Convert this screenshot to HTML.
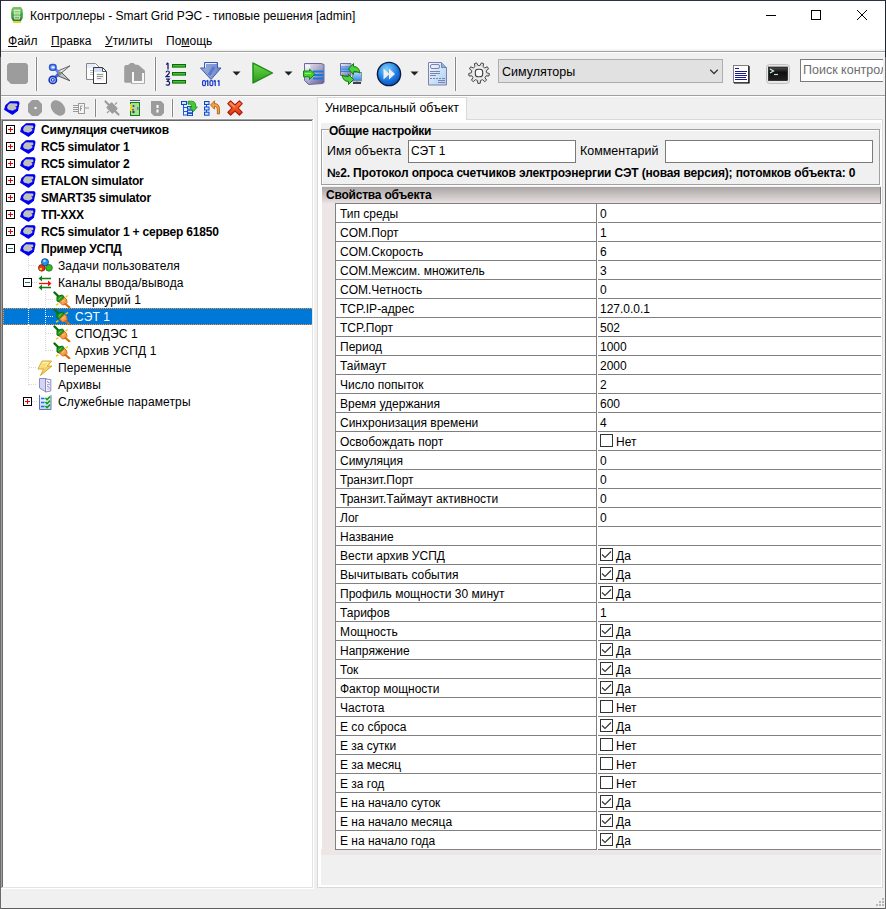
<!DOCTYPE html>
<html><head><meta charset="utf-8">
<style>
*{margin:0;padding:0;box-sizing:border-box}
html,body{width:886px;height:909px;overflow:hidden;background:#f0f0f0;font-family:"Liberation Sans",sans-serif;font-size:12px;color:#000}
.a{position:absolute;display:block}
.t{position:absolute;white-space:pre;line-height:14px}
.b{font-weight:bold}
.w{color:#fff}
</style></head><body>
<div class="a" style="left:0px;top:0px;width:886px;height:51px;background:#fff"></div><div class="a" style="left:0px;top:49px;width:886px;height:2px;background:#f4f4f4"></div><div class="a" style="left:0px;top:51px;width:886px;height:1px;background:#a0a0a0"></div><div class="a" style="left:0px;top:52px;width:886px;height:1px;background:#fff"></div><div class="t" style="left:30px;top:9px;">Контроллеры - Smart Grid РЭС - типовые решения [admin]</div><svg class="a" style="left:10px;top:6px" width="14" height="18" viewBox="0 0 14 18"><defs><linearGradient id="ga" x1="0" y1="0" x2="0" y2="1"><stop offset="0" stop-color="#7ac860"/><stop offset=".6" stop-color="#3aa83a"/><stop offset="1" stop-color="#18802a"/></linearGradient></defs>
<path d="M3 1h8l1.5 2.5L13 8l-.5 4.5L11 15H3l-1.5-2.5L1 8l.5-4.5z" fill="url(#ga)"/>
<path d="M3.5 3.5h7l-.5 6h-6z" fill="#d8e4da"/>
<path d="M3.5 10h7l-.8 3.5H4.3z" fill="#d0d4d0"/>
<rect x="4.5" y="5" width="5" height="1.4" fill="#8cd060"/><rect x="4.5" y="7.6" width="5" height="1.4" fill="#8cd060"/><rect x="5" y="11" width="4" height="1.4" fill="#6cc040"/>
<rect x="3" y="15" width="8" height="2" fill="#e8d430"/></svg><div class="a" style="left:766px;top:15px;width:10px;height:1px;background:#000"></div><div class="a" style="left:811px;top:10px;width:10px;height:10px;border:1px solid #000"></div><svg class="a" style="left:856px;top:9px" width="12" height="12" viewBox="0 0 12 12"><path d="M1 1L11 11M11 1L1 11" stroke="#000" stroke-width="1"/></svg><div class="t" style="left:8px;top:34px;"><u>Ф</u>айл</div><div class="t" style="left:51px;top:34px;"><u>П</u>равка</div><div class="t" style="left:105px;top:34px;"><u>У</u>тилиты</div><div class="t" style="left:166px;top:34px;">По<u>м</u>ощь</div><div class="a" style="left:1px;top:53px;width:884px;height:42px;background:#f0f0f0"></div><div class="a" style="left:1px;top:95px;width:884px;height:1px;background:#a0a0a0"></div><div class="a" style="left:1px;top:96px;width:884px;height:1px;background:#fff"></div><div class="a" style="left:35px;top:57px;width:3px;height:34px;background:#fafafa"></div><div class="a" style="left:36px;top:57px;width:1px;height:34px;background:#858585"></div><div class="a" style="left:154px;top:57px;width:3px;height:34px;background:#fafafa"></div><div class="a" style="left:155px;top:57px;width:1px;height:34px;background:#858585"></div><div class="a" style="left:454px;top:57px;width:3px;height:34px;background:#fafafa"></div><div class="a" style="left:455px;top:57px;width:1px;height:34px;background:#858585"></div><svg class="a" style="left:7px;top:63px" width="22" height="22" viewBox="0 0 22 22"><path d="M2 0h17l2 2v17l-2 2H4l-4-4V2z" fill="#9c9c9c"/></svg><svg class="a" style="left:46px;top:61px" width="28" height="26" viewBox="0 0 28 26"><path d="M10.5 10.5L24 4.8L13 14z" fill="#e0e0e0" stroke="#5a5a5a" stroke-width=".9" stroke-linejoin="round"/>
<path d="M11 14.5L24 19.8L15 11z" fill="#c4c4c4" stroke="#4a4a4a" stroke-width=".9" stroke-linejoin="round"/>
<circle cx="13.5" cy="12.5" r="2" fill="#8a8a8a"/>
<path d="M8.5 7.5l4 3.5" stroke="#5a88e8" stroke-width="2.6"/>
<rect x="3.6" y="3.6" width="6.4" height="5.6" rx="2.4" fill="#88a8f0" stroke="#2a58d0" stroke-width="1.5"/>
<rect x="5.8" y="5.6" width="2.6" height="1.4" fill="#fff"/>
<path d="M9.5 16l3-3" stroke="#3a68d8" stroke-width="2.8"/>
<ellipse cx="6.8" cy="18.9" rx="3.7" ry="3.6" fill="#a0b8f4" stroke="#1030b8" stroke-width="1.5"/>
<circle cx="6.8" cy="18.9" r="1.4" fill="#fff" stroke="#1030b8" stroke-width="1"/></svg><svg class="a" style="left:84px;top:61px" width="26" height="26" viewBox="0 0 26 26"><path d="M2.5 2.5H11.5L15.5 6.5V18.5H2.5Z" fill="#fff" stroke="#888" stroke-width="1"/>
<rect x="3" y="3" width="8.5" height="4" fill="#e6ecfc"/>
<path d="M6 9.5h3M6 11.5h3M6 13.5h3" stroke="#c0c0c0"/>
<path d="M9.5 6.5H18.5L22.5 10.5V22.5H9.5Z" fill="#fff" stroke="#383838" stroke-width="1"/>
<path d="M18.5 6.5V10.5H22.5" fill="none" stroke="#555" stroke-width="1"/>
<rect x="10" y="7" width="8" height="4" fill="#d2ddf8"/>
<rect x="12" y="12" width="8" height="7.5" fill="#f0f0f0"/>
<path d="M13 13.5h6M13 15.5h6M13 17.5h4" stroke="#9a9a9a"/></svg><svg class="a" style="left:122px;top:61px" width="24" height="24" viewBox="0 0 24 24"><path d="M2.2 5.5L3.5 4L6 4L8.5 2L11.5 2L13 3.5L16.5 4L22.9 9.5V22.8H9V21.7H3L2.2 20.8Z" fill="#9e9e9e"/>
<path d="M11 11V21H21V12" stroke="#f8f8f8" stroke-width="2" fill="none"/></svg><svg class="a" style="left:165px;top:62px" width="22" height="24" viewBox="0 0 22 24"><path d="M3 1v6.5M1.2 2.6L3 .8" stroke="#141e70" stroke-width="1.3" fill="none"/>
<path d="M1 10.3Q1.3 9 2.7 9Q4.4 9 4.3 10.6Q4.2 11.8 1 14.6H4.8" stroke="#141e70" stroke-width="1.2" fill="none"/>
<path d="M1 17.2H4.3L2.4 19.4Q4.6 19.3 4.6 21.2Q4.5 23.2 2.5 23.2Q1.3 23.2 .8 22.5" stroke="#141e70" stroke-width="1.2" fill="none"/>
<rect x="7.5" y="2.5" width="13" height="2.6" fill="#44c030" stroke="#0a6a0a"/>
<rect x="7.5" y="10.5" width="13" height="2.6" fill="#44c030" stroke="#0a6a0a"/>
<rect x="7.5" y="18.5" width="13" height="2.6" fill="#44c030" stroke="#0a6a0a"/></svg><svg class="a" style="left:199px;top:61px" width="24" height="26" viewBox="0 0 24 26"><defs><linearGradient id="gd" x1="0" x2="1"><stop offset="0" stop-color="#9ab0d8"/><stop offset="1" stop-color="#7088c8"/></linearGradient></defs>
<path d="M5.5 1.5h13v5.5h3.5l-10 11.5-10.5-11.5h4z" fill="url(#gd)" stroke="#3a5ab8" stroke-linejoin="round"/>
<path d="M6.5 6.5V2.5h11" stroke="#e8f0ff" fill="none"/>
<path d="M10 14l5-8" stroke="#5a78d0" stroke-width="3"/>
<rect x="3.6" y="19.6" width="2.8" height="5" rx="1" fill="none" stroke="#1a3cc8" stroke-width="1.2"/><rect x="11" y="19.6" width="2.8" height="5" rx="1" fill="none" stroke="#1a3cc8" stroke-width="1.2"/>
<path d="M8.8 19.2v5.8M16.2 19.2v5.8M20 19.2v5.8M7.4 20.4l1.4-1.2M14.8 20.4l1.4-1.2M18.6 20.4l1.4-1.2" stroke="#1a3cc8" stroke-width="1.3"/></svg><svg class="a" style="left:232px;top:71px" width="9" height="5" viewBox="0 0 9 5"><path d="M0.5 .5h8l-4 4z" fill="#202020"/></svg><svg class="a" style="left:252px;top:62px" width="22" height="22" viewBox="0 0 22 22"><defs><linearGradient id="gp" x1="0" y1="0" x2="0" y2="1"><stop offset="0" stop-color="#70d850"/><stop offset="1" stop-color="#2a9a18"/></linearGradient></defs>
<path d="M1 1l19.5 10L1 21z" fill="url(#gp)" stroke="#1c8a10" stroke-width="1.4" stroke-linejoin="round"/></svg><svg class="a" style="left:284px;top:71px" width="9" height="5" viewBox="0 0 9 5"><path d="M0.5 .5h8l-4 4z" fill="#202020"/></svg><svg class="a" style="left:301px;top:60px" width="26" height="27" viewBox="0 0 26 27"><defs><linearGradient id="gs" x1="0" y1="0" x2="1" y2="1"><stop offset="0" stop-color="#f0f0ff"/><stop offset=".45" stop-color="#b4b0c8"/><stop offset="1" stop-color="#5a5a98"/></linearGradient>
<linearGradient id="gs2" x1="0" y1="0" x2="0" y2="1"><stop offset="0" stop-color="#f8f8ff"/><stop offset="1" stop-color="#9a9ad0"/></linearGradient></defs>
<path d="M3.5 3.5H20L23 4.5V22.5L21.5 23.5L7.5 24.5L3.5 20.5Z" fill="url(#gs)" stroke="#6a6a9a" stroke-width="1" stroke-linejoin="round"/>
<path d="M4 5H9V24L4 20Z" fill="url(#gs2)"/>
<path d="M12 11.5h10.5M12 15h10.5M12 18.5h10.5" stroke="#1878e0" stroke-width="1.8"/>
<path d="M2.5 11H8.5V9.2L13.8 14L8.5 19.5V16.8H2.5Z" fill="#48d030" stroke="#0a8a0a" stroke-width="1" stroke-linejoin="round"/>
<path d="M4 13.5h6" stroke="#90f070" stroke-width="1"/></svg><svg class="a" style="left:336px;top:60px" width="28" height="27" viewBox="0 0 28 27"><defs><linearGradient id="gsy" x1="0" y1="0" x2="1" y2="1"><stop offset="0" stop-color="#f0f0ff"/><stop offset="1" stop-color="#7070a8"/></linearGradient>
<linearGradient id="gmo" x1="0" y1="0" x2="0" y2="1"><stop offset="0" stop-color="#a8d8ff"/><stop offset="1" stop-color="#2a88e8"/></linearGradient></defs>
<path d="M4.5 3.5H15V15.5H4.5Z" fill="url(#gsy)" stroke="#7070a0" stroke-width="1"/>
<path d="M5 7h9M5 9.2h9M5 11.4h9" stroke="#2080e0" stroke-width="1.2"/>
<rect x="16.5" y="12.5" width="9" height="8.5" fill="url(#gmo)" stroke="#909090"/>
<path d="M17 23h8" stroke="#404040" stroke-width="2"/><path d="M21 21v1" stroke="#808080"/>
<path d="M12.5 9L17.5 3.5V6.5Q23 6.5 24 13Q21.5 11 17.5 11.5V14.5Z" fill="#50d040" stroke="#0a800a" stroke-width="1" stroke-linejoin="round"/>
<path d="M17.5 19.5L12.5 24.5V21.5Q7 21.5 6 15Q8.5 17 12.5 16.5V14.5Z" fill="#50d040" stroke="#0a800a" stroke-width="1" stroke-linejoin="round"/></svg><svg class="a" style="left:376px;top:61px" width="26" height="26" viewBox="0 0 26 26"><defs><radialGradient id="gb" cx=".4" cy=".3" r=".8"><stop offset="0" stop-color="#80d0ff"/><stop offset=".6" stop-color="#1878e0"/><stop offset="1" stop-color="#0840b0"/></radialGradient></defs>
<circle cx="13" cy="13" r="11.6" fill="url(#gb)" stroke="#0a1a40" stroke-width="1.4"/>
<path d="M7.5 7.5l6 5.5-6 5.5zM13 7.5l6 5.5-6 5.5z" fill="#f0f0f0"/></svg><svg class="a" style="left:410px;top:71px" width="9" height="5" viewBox="0 0 9 5"><path d="M0.5 .5h8l-4 4z" fill="#202020"/></svg><svg class="a" style="left:428px;top:62px" width="20" height="24" viewBox="0 0 20 24"><defs><linearGradient id="gdc" x1="0" y1="0" x2="1" y2="1"><stop offset="0" stop-color="#f4f8ff"/><stop offset="1" stop-color="#a8d0f0"/></linearGradient></defs>
<path d="M.5 .5h13l5 5v17.5H.5z" fill="url(#gdc)" stroke="#8080b0"/>
<path d="M13.5 .5v5h5" fill="#7ab8e8" stroke="#8080b0"/>
<rect x="2.5" y="2.5" width="9" height="4" rx="1.5" fill="none" stroke="#8080b0"/>
<path d="M2 9.5h10M2 11.5h10M2 13.5h6M2 16.5h2M5 16.5h2M8 16.5h2M11 16.5h2M14 16.5h3M10 18.5h7M10 20.5h7" stroke="#8080b0" stroke-width="1"/></svg><svg class="a" style="left:468px;top:62px" width="22" height="22" viewBox="0 0 22 22"><defs><radialGradient id="gg" cx=".5" cy=".5" r=".5"><stop offset=".3" stop-color="#f8f8f8"/><stop offset="1" stop-color="#d8d8d8"/></radialGradient></defs>
<polygon points="12.06,3.47 13.37,0.87 15.69,1.72 15.03,4.55 16.65,5.91 19.33,4.77 20.56,6.90 18.23,8.65 18.60,10.73 21.38,11.58 20.96,14.01 18.05,13.85 16.99,15.68 18.58,18.12 16.69,19.70 14.57,17.71 12.58,18.43 12.23,21.33 9.77,21.33 9.42,18.43 7.43,17.71 5.31,19.70 3.42,18.12 5.01,15.68 3.95,13.85 1.04,14.01 0.62,11.58 3.40,10.73 3.77,8.65 1.44,6.90 2.67,4.77 5.35,5.91 6.97,4.55 6.31,1.72 8.63,0.87 9.94,3.47" fill="url(#gg)" stroke="#4a4a4a" stroke-width="1" stroke-linejoin="round"/>
<rect x="7.3" y="7.3" width="7.4" height="7.4" rx="2.8" fill="#fafafa" stroke="#3a3a3a" stroke-width="1.1"/></svg><div class="a" style="left:498px;top:59px;width:225px;height:24px;background:#e1e1e1;border:1px solid #adadad"></div><div class="t" style="left:502px;top:65px;font-size:12.5px">Симуляторы</div><svg class="a" style="left:709px;top:68px" width="10" height="7" viewBox="0 0 10 7"><path d="M1.2 1.8L5 5.5L8.8 1.8" fill="none" stroke="#3a3a3a" stroke-width="1.3"/></svg><svg class="a" style="left:733px;top:65px" width="17" height="19" viewBox="0 0 17 19"><rect x=".5" y=".5" width="15" height="17" fill="#fff" stroke="#808080"/>
<path d="M16 1v17H1" stroke="#000" stroke-width="1.2" fill="none"/>
<path d="M2 3.5h4M2 6.5h12M2 8.5h11M2 10.5h12M2 12.5h11M2 14.5h12" stroke="#1a1a90" stroke-width="1.1"/></svg><svg class="a" style="left:766px;top:64px" width="24" height="20" viewBox="0 0 24 20"><rect x=".5" y=".5" width="23" height="19" rx="3" fill="#e8e8e8" stroke="#c0c0c0"/>
<defs><linearGradient id="gt" x1="0" y1="0" x2="0" y2="1"><stop offset="0" stop-color="#505050"/><stop offset=".4" stop-color="#101010"/><stop offset="1" stop-color="#202020"/></linearGradient></defs>
<rect x="2.5" y="3" width="19" height="13.5" fill="url(#gt)" stroke="#000" stroke-width=".6"/>
<path d="M4 5l3.5 2L4 9" stroke="#d0f0f0" stroke-width="1.2" fill="none"/><path d="M8 10.5h4" stroke="#b0e0e0" stroke-width="1.2"/></svg><div class="a" style="left:800px;top:59px;width:83px;height:23px;background:#fff;border:1px solid #7a7a7a;border-right:none;overflow:hidden"><div class="t" style="left:2px;top:3px;color:#6d6d6d;font-size:12.5px">Поиск контроллера</div></div><div class="a" style="left:94px;top:99px;width:3px;height:18px;background:#fafafa"></div><div class="a" style="left:95px;top:99px;width:1px;height:18px;background:#858585"></div><div class="a" style="left:171px;top:99px;width:3px;height:18px;background:#fafafa"></div><div class="a" style="left:172px;top:99px;width:1px;height:18px;background:#858585"></div><svg class="a" style="left:4px;top:100px" width="16" height="16" viewBox="0 0 16 16"><path d="M6.4 1.8L14 1.8Q15 2.2 14.8 3.5L13.3 10.6L8.4 14.2L0.8 9.5L2 5.5z" fill="#0000f0" stroke="#0000f0" stroke-width="1.3" stroke-linejoin="round"/>
<path d="M6 3.2L12.8 3.6Q13.8 4.6 13.2 6L11.2 6.6L12.6 7.8L12 9L8.5 10.8L4 9.5L3 7.5Q3.5 4.5 6 3.2z" fill="#c0c0bc"/></svg><svg class="a" style="left:28px;top:100px" width="15" height="16" viewBox="0 0 15 16"><path d="M4 0h6l4 4v8l-4 4H4l-4-4V4z" fill="#9c9c9c"/><rect x="6.5" y="7" width="2" height="2" fill="#fff"/></svg><svg class="a" style="left:50px;top:100px" width="16" height="16" viewBox="0 0 16 16"><ellipse cx="8" cy="8" rx="6.2" ry="8.6" transform="rotate(-40 8 8)" fill="#9c9c9c"/></svg><svg class="a" style="left:73px;top:103px" width="16" height="11" viewBox="0 0 16 11"><rect x="5.5" y=".5" width="6" height="10" fill="#f4f4f4" stroke="#9a9a9a"/>
<path d="M0 2.5h5M0 4.5h5M0 6.5h5M0 8.5h5M12 5h4" stroke="#9a9a9a"/><path d="M7.5 3v5M7.5 3h2M7.5 5.5h1.5" stroke="#9a9a9a"/></svg><svg class="a" style="left:104px;top:100px" width="16" height="16" viewBox="0 0 16 16"><path d="M1.5 1.5l13 13" stroke="#9c9c9c" stroke-width="2.2" stroke-linecap="round"/>
<path d="M8 8" stroke="#9c9c9c"/><path d="M3.5 7.5L7.5 3.5L12.5 8.5L8.5 12.5z" fill="#9c9c9c" stroke="#9c9c9c" stroke-width="2.2" stroke-linejoin="round"/>
<path d="M11 4.5l2-2M3 13l2-2" stroke="#9c9c9c" stroke-width="1.2"/></svg><svg class="a" style="left:129px;top:100px" width="12" height="16" viewBox="0 0 12 16"><rect x="1" y="0" width="10" height="1" fill="#506080"/>
<rect x="1.5" y="2.5" width="9" height="13" fill="#a8e090" stroke="#108010"/>
<rect x="1" y="4" width="1.5" height="7" fill="#f0e000"/>
<circle cx="4.5" cy="6" r="1" fill="#2040a0"/><circle cx="4.5" cy="12" r="1.2" fill="#2040a0"/><rect x="3" y="9" width="2" height="1.5" fill="#e04020"/><rect x="8" y="7" width="1.5" height="3" fill="#6080e0"/></svg><svg class="a" style="left:151px;top:101px" width="14" height="15" viewBox="0 0 14 15"><path d="M0 0h10l3 3v9l-3 3H3l-3-3z" fill="#9c9c9c"/><rect x="5.5" y="4" width="2" height="3" fill="#fff"/><rect x="5.5" y="8.5" width="2" height="3" fill="#fff"/></svg><svg class="a" style="left:181px;top:100px" width="17" height="16" viewBox="0 0 17 16"><path d="M2.5 5v10.5M2.5 7.5h4M2.5 11.5h4M2.5 15h4" stroke="#1060e0"/>
<rect x=".5" y="1.5" width="5" height="3" fill="#d0e4ff" stroke="#0a48c8"/>
<rect x="6.5" y="6.5" width="5" height="2.6" fill="#d0e4ff" stroke="#0a48c8"/><rect x="6.5" y="10.2" width="5" height="2.6" fill="#d0e4ff" stroke="#0a48c8"/><rect x="6.5" y="13.4" width="5" height="2.2" fill="#d0e4ff" stroke="#0a48c8"/>
<path d="M7 1.2h3.5c3 0 4.2 1.8 4.2 4.5v1.3h1.6L12.5 11.5 8.7 7h1.8V6c0-1.2-.7-1.8-2-1.8H7z" fill="#48c838" stroke="#108a10" stroke-width=".8"/></svg><svg class="a" style="left:203px;top:100px" width="18" height="16" viewBox="0 0 18 16"><path d="M3.5 4.5v9" stroke="#1060e0"/>
<rect x="1.5" y="1.5" width="4.5" height="3" fill="#d0e4ff" stroke="#0a48c8"/><rect x="1.5" y="7" width="4.5" height="3" fill="#d0e4ff" stroke="#0a48c8"/><rect x="1.5" y="12.2" width="4.5" height="3" fill="#d0e4ff" stroke="#0a48c8"/>
<path d="M7.5 5l4-4.2v2.7c3 0 5 2 5 5.2v5.2h-2.2V9c0-1.6-1.2-2.6-2.8-2.6v2.8z" fill="#f4a040" stroke="#a85810" stroke-width=".8"/></svg><svg class="a" style="left:227px;top:100px" width="17" height="16" viewBox="0 0 17 16"><defs><linearGradient id="gx" x1="0" y1="0" x2="0" y2="1"><stop offset="0" stop-color="#ff8040"/><stop offset="1" stop-color="#e03000"/></linearGradient></defs>
<path d="M.8 3.6L3.6 .8L8 4.8L12.4 .8L15.2 3.6L11.2 8L15.2 12.4L12.4 15.2L8 11.2L3.6 15.2L.8 12.4L4.8 8Z" fill="url(#gx)" stroke="#a01818" stroke-width="1.1" stroke-linejoin="round"/>
<path d="M3.5 3.3L8 7.3" stroke="#ffb080" stroke-width="1"/></svg><div class="a" style="left:0px;top:118px;width:313px;height:1px;background:#f8f8f8"></div><div class="a" style="left:3px;top:121px;width:309px;height:766px;background:#fff"></div><div class="a" style="left:1px;top:119px;width:312px;height:1px;background:#a0a0a0"></div><div class="a" style="left:2px;top:120px;width:310px;height:1px;background:#696969"></div><div class="a" style="left:2px;top:120px;width:1px;height:767px;background:#696969"></div><div class="a" style="left:312px;top:120px;width:1px;height:768px;background:#e3e3e3"></div><div class="a" style="left:2px;top:887px;width:311px;height:1px;background:#e3e3e3"></div><div class="a" style="left:3px;top:308px;width:309px;height:17px;background:#0078d7"></div><div class="a" style="left:3px;top:308px;width:309px;height:1px;background:repeating-linear-gradient(to right,#ff9030 0 1px,transparent 1px 2px)"></div><div class="a" style="left:3px;top:324px;width:309px;height:1px;background:repeating-linear-gradient(to right,#ff9030 0 1px,transparent 1px 2px)"></div><div class="a" style="left:3px;top:308px;width:1px;height:17px;background:repeating-linear-gradient(to bottom,#ff9030 0 1px,transparent 1px 2px)"></div><div class="a" style="left:28px;top:256px;width:1px;height:129px;background:repeating-linear-gradient(to bottom,#d8d8d8 0 1px,transparent 1px 2px)"></div><div class="a" style="left:29px;top:265px;width:8px;height:1px;background:repeating-linear-gradient(to right,#d8d8d8 0 1px,transparent 1px 2px)"></div><div class="a" style="left:29px;top:367px;width:8px;height:1px;background:repeating-linear-gradient(to right,#d8d8d8 0 1px,transparent 1px 2px)"></div><div class="a" style="left:29px;top:384px;width:8px;height:1px;background:repeating-linear-gradient(to right,#d8d8d8 0 1px,transparent 1px 2px)"></div><div class="a" style="left:32px;top:282px;width:5px;height:1px;background:repeating-linear-gradient(to right,#d8d8d8 0 1px,transparent 1px 2px)"></div><div class="a" style="left:32px;top:401px;width:5px;height:1px;background:repeating-linear-gradient(to right,#d8d8d8 0 1px,transparent 1px 2px)"></div><div class="a" style="left:45px;top:290px;width:1px;height:61px;background:repeating-linear-gradient(to bottom,#d8d8d8 0 1px,transparent 1px 2px)"></div><div class="a" style="left:46px;top:299px;width:8px;height:1px;background:repeating-linear-gradient(to right,#d8d8d8 0 1px,transparent 1px 2px)"></div><div class="a" style="left:46px;top:333px;width:8px;height:1px;background:repeating-linear-gradient(to right,#d8d8d8 0 1px,transparent 1px 2px)"></div><div class="a" style="left:46px;top:350px;width:8px;height:1px;background:repeating-linear-gradient(to right,#d8d8d8 0 1px,transparent 1px 2px)"></div><div class="a" style="left:28px;top:308px;width:1px;height:17px;background:repeating-linear-gradient(to bottom,#fff 0 1px,transparent 1px 2px)"></div><div class="a" style="left:45px;top:308px;width:1px;height:17px;background:repeating-linear-gradient(to bottom,#fff 0 1px,transparent 1px 2px)"></div><div class="a" style="left:46px;top:316px;width:8px;height:1px;background:repeating-linear-gradient(to right,#fff 0 1px,transparent 1px 2px)"></div><svg class="a" style="left:6px;top:125px" width="9" height="9" viewBox="0 0 9 9"><rect x=".5" y=".5" width="8" height="8" fill="#fff" stroke="#000"/><path d="M2 4.5h5" stroke="#e00000"/><path d="M4.5 2v5" stroke="#e00000"/></svg><svg class="a" style="left:20px;top:122px" width="16" height="16" viewBox="0 0 16 16"><path d="M6.4 1.8L14 1.8Q15 2.2 14.8 3.5L13.3 10.6L8.4 14.2L0.8 9.5L2 5.5z" fill="#0000f0" stroke="#0000f0" stroke-width="1.3" stroke-linejoin="round"/>
<path d="M6 3.2L12.8 3.6Q13.8 4.6 13.2 6L11.2 6.6L12.6 7.8L12 9L8.5 10.8L4 9.5L3 7.5Q3.5 4.5 6 3.2z" fill="#c0c0bc"/></svg><div class="t" style="left:41px;top:123px;font-weight:bold;letter-spacing:-0.2px">Симуляция счетчиков</div><svg class="a" style="left:6px;top:142px" width="9" height="9" viewBox="0 0 9 9"><rect x=".5" y=".5" width="8" height="8" fill="#fff" stroke="#000"/><path d="M2 4.5h5" stroke="#e00000"/><path d="M4.5 2v5" stroke="#e00000"/></svg><svg class="a" style="left:20px;top:139px" width="16" height="16" viewBox="0 0 16 16"><path d="M6.4 1.8L14 1.8Q15 2.2 14.8 3.5L13.3 10.6L8.4 14.2L0.8 9.5L2 5.5z" fill="#0000f0" stroke="#0000f0" stroke-width="1.3" stroke-linejoin="round"/>
<path d="M6 3.2L12.8 3.6Q13.8 4.6 13.2 6L11.2 6.6L12.6 7.8L12 9L8.5 10.8L4 9.5L3 7.5Q3.5 4.5 6 3.2z" fill="#c0c0bc"/></svg><div class="t" style="left:41px;top:140px;font-weight:bold;letter-spacing:-0.2px">RC5 simulator 1</div><svg class="a" style="left:6px;top:159px" width="9" height="9" viewBox="0 0 9 9"><rect x=".5" y=".5" width="8" height="8" fill="#fff" stroke="#000"/><path d="M2 4.5h5" stroke="#e00000"/><path d="M4.5 2v5" stroke="#e00000"/></svg><svg class="a" style="left:20px;top:156px" width="16" height="16" viewBox="0 0 16 16"><path d="M6.4 1.8L14 1.8Q15 2.2 14.8 3.5L13.3 10.6L8.4 14.2L0.8 9.5L2 5.5z" fill="#0000f0" stroke="#0000f0" stroke-width="1.3" stroke-linejoin="round"/>
<path d="M6 3.2L12.8 3.6Q13.8 4.6 13.2 6L11.2 6.6L12.6 7.8L12 9L8.5 10.8L4 9.5L3 7.5Q3.5 4.5 6 3.2z" fill="#c0c0bc"/></svg><div class="t" style="left:41px;top:157px;font-weight:bold;letter-spacing:-0.2px">RC5 simulator 2</div><svg class="a" style="left:6px;top:176px" width="9" height="9" viewBox="0 0 9 9"><rect x=".5" y=".5" width="8" height="8" fill="#fff" stroke="#000"/><path d="M2 4.5h5" stroke="#e00000"/><path d="M4.5 2v5" stroke="#e00000"/></svg><svg class="a" style="left:20px;top:173px" width="16" height="16" viewBox="0 0 16 16"><path d="M6.4 1.8L14 1.8Q15 2.2 14.8 3.5L13.3 10.6L8.4 14.2L0.8 9.5L2 5.5z" fill="#0000f0" stroke="#0000f0" stroke-width="1.3" stroke-linejoin="round"/>
<path d="M6 3.2L12.8 3.6Q13.8 4.6 13.2 6L11.2 6.6L12.6 7.8L12 9L8.5 10.8L4 9.5L3 7.5Q3.5 4.5 6 3.2z" fill="#c0c0bc"/></svg><div class="t" style="left:41px;top:174px;font-weight:bold;letter-spacing:-0.2px">ETALON simulator</div><svg class="a" style="left:6px;top:193px" width="9" height="9" viewBox="0 0 9 9"><rect x=".5" y=".5" width="8" height="8" fill="#fff" stroke="#000"/><path d="M2 4.5h5" stroke="#e00000"/><path d="M4.5 2v5" stroke="#e00000"/></svg><svg class="a" style="left:20px;top:190px" width="16" height="16" viewBox="0 0 16 16"><path d="M6.4 1.8L14 1.8Q15 2.2 14.8 3.5L13.3 10.6L8.4 14.2L0.8 9.5L2 5.5z" fill="#0000f0" stroke="#0000f0" stroke-width="1.3" stroke-linejoin="round"/>
<path d="M6 3.2L12.8 3.6Q13.8 4.6 13.2 6L11.2 6.6L12.6 7.8L12 9L8.5 10.8L4 9.5L3 7.5Q3.5 4.5 6 3.2z" fill="#c0c0bc"/></svg><div class="t" style="left:41px;top:191px;font-weight:bold;letter-spacing:-0.2px">SMART35 simulator</div><svg class="a" style="left:6px;top:210px" width="9" height="9" viewBox="0 0 9 9"><rect x=".5" y=".5" width="8" height="8" fill="#fff" stroke="#000"/><path d="M2 4.5h5" stroke="#e00000"/><path d="M4.5 2v5" stroke="#e00000"/></svg><svg class="a" style="left:20px;top:207px" width="16" height="16" viewBox="0 0 16 16"><path d="M6.4 1.8L14 1.8Q15 2.2 14.8 3.5L13.3 10.6L8.4 14.2L0.8 9.5L2 5.5z" fill="#0000f0" stroke="#0000f0" stroke-width="1.3" stroke-linejoin="round"/>
<path d="M6 3.2L12.8 3.6Q13.8 4.6 13.2 6L11.2 6.6L12.6 7.8L12 9L8.5 10.8L4 9.5L3 7.5Q3.5 4.5 6 3.2z" fill="#c0c0bc"/></svg><div class="t" style="left:41px;top:208px;font-weight:bold;letter-spacing:-0.2px">ТП-ХХХ</div><svg class="a" style="left:6px;top:227px" width="9" height="9" viewBox="0 0 9 9"><rect x=".5" y=".5" width="8" height="8" fill="#fff" stroke="#000"/><path d="M2 4.5h5" stroke="#e00000"/><path d="M4.5 2v5" stroke="#e00000"/></svg><svg class="a" style="left:20px;top:224px" width="16" height="16" viewBox="0 0 16 16"><path d="M6.4 1.8L14 1.8Q15 2.2 14.8 3.5L13.3 10.6L8.4 14.2L0.8 9.5L2 5.5z" fill="#0000f0" stroke="#0000f0" stroke-width="1.3" stroke-linejoin="round"/>
<path d="M6 3.2L12.8 3.6Q13.8 4.6 13.2 6L11.2 6.6L12.6 7.8L12 9L8.5 10.8L4 9.5L3 7.5Q3.5 4.5 6 3.2z" fill="#c0c0bc"/></svg><div class="t" style="left:41px;top:225px;font-weight:bold;letter-spacing:-0.2px">RC5 simulator 1 + сервер 61850</div><svg class="a" style="left:6px;top:244px" width="9" height="9" viewBox="0 0 9 9"><rect x=".5" y=".5" width="8" height="8" fill="#fff" stroke="#000"/><path d="M2 4.5h5" stroke="#008080"/></svg><svg class="a" style="left:20px;top:241px" width="16" height="16" viewBox="0 0 16 16"><path d="M6.4 1.8L14 1.8Q15 2.2 14.8 3.5L13.3 10.6L8.4 14.2L0.8 9.5L2 5.5z" fill="#0000f0" stroke="#0000f0" stroke-width="1.3" stroke-linejoin="round"/>
<path d="M6 3.2L12.8 3.6Q13.8 4.6 13.2 6L11.2 6.6L12.6 7.8L12 9L8.5 10.8L4 9.5L3 7.5Q3.5 4.5 6 3.2z" fill="#c0c0bc"/></svg><div class="t" style="left:41px;top:242px;font-weight:bold;letter-spacing:-0.2px">Пример УСПД</div><svg class="a" style="left:38px;top:258px" width="15" height="15" viewBox="0 0 15 15"><circle cx="3.8" cy="9.8" r="3.4" fill="#f03010" stroke="#401010" stroke-width=".6"/>
<circle cx="11" cy="9.8" r="3.4" fill="#30c020" stroke="#104010" stroke-width=".6"/>
<circle cx="7" cy="4.2" r="3.6" fill="#2090f0" stroke="#102050" stroke-width=".6"/>
<circle cx="2.8" cy="11" r="1.3" fill="#f8d020"/><circle cx="6.5" cy="3" r="1.3" fill="#a0e8ff"/></svg><div class="t" style="left:58px;top:259px;letter-spacing:0.12px">Задачи пользователя</div><svg class="a" style="left:23px;top:278px" width="9" height="9" viewBox="0 0 9 9"><rect x=".5" y=".5" width="8" height="8" fill="#fff" stroke="#000"/><path d="M2 4.5h5" stroke="#008080"/></svg><svg class="a" style="left:38px;top:275px" width="14" height="16" viewBox="0 0 14 16"><path d="M2 3.5h11M2 12.5h11" stroke="#108010" stroke-width="1.3"/><path d="M0.5 3.5l3.5-3v6zM0.5 12.5l3.5-3v6z" fill="#108010"/>
<path d="M1 8.5h10" stroke="#f01010" stroke-width="1.3"/><path d="M13.5 8.5l-3.5-3v6z" fill="#f01010"/></svg><div class="t" style="left:58px;top:276px;letter-spacing:0.12px">Каналы ввода/вывода</div><svg class="a" style="left:53px;top:290px" width="18" height="18" viewBox="0 0 18 18"><path d="M1.5 2.5l3.5 3.5" stroke="#0a700a" stroke-width="2.4" stroke-linecap="round"/>
<path d="M4 6.5L9.5 5L11.5 7.5L6.5 12L4 11z" fill="#1e9a1e" stroke="#0a6a0a" stroke-width="1" stroke-linejoin="round"/>
<path d="M5.5 9.5L8.5 7" stroke="#70d850" stroke-width="1"/>
<path d="M11.5 7.5L13.5 9.5L14 12.5L12 14.5L9.5 15L6.5 12z" fill="#f4a050" stroke="#d86a10" stroke-width="1" stroke-linejoin="round"/>
<path d="M9 11.5l2.5-1.5" stroke="#ffd090" stroke-width="1"/>
<path d="M12.5 14l3.8 3.3" stroke="#d86a10" stroke-width="2.2" stroke-linecap="round"/>
<path d="M12.5 7.2l2.5-1.7M3 15.2l2.5-1.5" stroke="#f0d000" stroke-width="1.4"/></svg><div class="t" style="left:75px;top:293px;letter-spacing:0.12px">Меркурий 1</div><svg class="a" style="left:53px;top:307px" width="18" height="18" viewBox="0 0 18 18"><path d="M1.5 2.5l3.5 3.5" stroke="#0a700a" stroke-width="2.4" stroke-linecap="round"/>
<path d="M4 6.5L9.5 5L11.5 7.5L6.5 12L4 11z" fill="#1e9a1e" stroke="#0a6a0a" stroke-width="1" stroke-linejoin="round"/>
<path d="M5.5 9.5L8.5 7" stroke="#70d850" stroke-width="1"/>
<path d="M11.5 7.5L13.5 9.5L14 12.5L12 14.5L9.5 15L6.5 12z" fill="#f4a050" stroke="#d86a10" stroke-width="1" stroke-linejoin="round"/>
<path d="M9 11.5l2.5-1.5" stroke="#ffd090" stroke-width="1"/>
<path d="M12.5 14l3.8 3.3" stroke="#d86a10" stroke-width="2.2" stroke-linecap="round"/>
<path d="M12.5 7.2l2.5-1.7M3 15.2l2.5-1.5" stroke="#f0d000" stroke-width="1.4"/></svg><div class="t" style="left:75px;top:310px;color:#fff;letter-spacing:0.12px">СЭТ 1</div><svg class="a" style="left:53px;top:324px" width="18" height="18" viewBox="0 0 18 18"><path d="M1.5 2.5l3.5 3.5" stroke="#0a700a" stroke-width="2.4" stroke-linecap="round"/>
<path d="M4 6.5L9.5 5L11.5 7.5L6.5 12L4 11z" fill="#1e9a1e" stroke="#0a6a0a" stroke-width="1" stroke-linejoin="round"/>
<path d="M5.5 9.5L8.5 7" stroke="#70d850" stroke-width="1"/>
<path d="M11.5 7.5L13.5 9.5L14 12.5L12 14.5L9.5 15L6.5 12z" fill="#f4a050" stroke="#d86a10" stroke-width="1" stroke-linejoin="round"/>
<path d="M9 11.5l2.5-1.5" stroke="#ffd090" stroke-width="1"/>
<path d="M12.5 14l3.8 3.3" stroke="#d86a10" stroke-width="2.2" stroke-linecap="round"/>
<path d="M12.5 7.2l2.5-1.7M3 15.2l2.5-1.5" stroke="#f0d000" stroke-width="1.4"/></svg><div class="t" style="left:75px;top:327px;letter-spacing:0.12px">СПОДЭС 1</div><svg class="a" style="left:53px;top:341px" width="18" height="18" viewBox="0 0 18 18"><path d="M1.5 2.5l3.5 3.5" stroke="#0a700a" stroke-width="2.4" stroke-linecap="round"/>
<path d="M4 6.5L9.5 5L11.5 7.5L6.5 12L4 11z" fill="#1e9a1e" stroke="#0a6a0a" stroke-width="1" stroke-linejoin="round"/>
<path d="M5.5 9.5L8.5 7" stroke="#70d850" stroke-width="1"/>
<path d="M11.5 7.5L13.5 9.5L14 12.5L12 14.5L9.5 15L6.5 12z" fill="#f4a050" stroke="#d86a10" stroke-width="1" stroke-linejoin="round"/>
<path d="M9 11.5l2.5-1.5" stroke="#ffd090" stroke-width="1"/>
<path d="M12.5 14l3.8 3.3" stroke="#d86a10" stroke-width="2.2" stroke-linecap="round"/>
<path d="M12.5 7.2l2.5-1.7M3 15.2l2.5-1.5" stroke="#f0d000" stroke-width="1.4"/></svg><div class="t" style="left:75px;top:344px;letter-spacing:0.12px">Архив УСПД 1</div><svg class="a" style="left:37px;top:360px" width="16" height="17" viewBox="0 0 16 17"><defs><linearGradient id="gl" x1="0" y1="0" x2="1" y2="1"><stop offset="0" stop-color="#fff0a0"/><stop offset="1" stop-color="#e8b830"/></linearGradient></defs>
<path d="M5 1h9.5L10.5 6h4.5L3.5 15.5 6.5 9H1z" fill="url(#gl)" stroke="#d8a020" stroke-width=".9" stroke-linejoin="round"/>
<path d="M6 2.5h5.5L8 7" stroke="#fff8c8" stroke-width=".8" fill="none"/></svg><div class="t" style="left:58px;top:361px;letter-spacing:0.12px">Переменные</div><svg class="a" style="left:38px;top:376px" width="14" height="17" viewBox="0 0 14 17"><path d="M1.5 2.5L8 2.5L8 16L1.5 12Z" fill="#d4d4f4" stroke="#8080b8" stroke-width=".9" stroke-linejoin="round"/>
<path d="M7.5 3L12.8 3.5L12.8 15L7.5 16Z" fill="#f4f4ff" stroke="#8080b8" stroke-width=".9" stroke-linejoin="round"/>
<path d="M9 5.5l2.5 1.5M9 10l2.5 1.5" stroke="#7070a8" stroke-width=".9"/>
<path d="M9 8.5h3M9 13h3" stroke="#a0a0c8" stroke-width=".8"/></svg><div class="t" style="left:58px;top:378px;letter-spacing:0.12px">Архивы</div><svg class="a" style="left:23px;top:397px" width="9" height="9" viewBox="0 0 9 9"><rect x=".5" y=".5" width="8" height="8" fill="#fff" stroke="#000"/><path d="M2 4.5h5" stroke="#e00000"/><path d="M4.5 2v5" stroke="#e00000"/></svg><svg class="a" style="left:38px;top:393px" width="14" height="17" viewBox="0 0 14 17"><defs><linearGradient id="gcl" x1="0" y1="0" x2="0" y2="1"><stop offset="0" stop-color="#f8fcff"/><stop offset="1" stop-color="#b8d8f8"/></linearGradient></defs>
<path d="M1.5 2V16.5H13V2" fill="url(#gcl)" stroke="#6a70b0" stroke-width="1"/>
<path d="M3 5.5h3.5M3 9.5h3.5M3 13.5h3.5" stroke="#2a6ae0" stroke-width="1.3"/>
<path d="M7.5 5l1.5 1.6 3-3M7.5 9l1.5 1.6 3-3M7.5 13l1.5 1.6 3-3" stroke="#10a010" stroke-width="1.5" fill="none"/></svg><div class="t" style="left:58px;top:395px;letter-spacing:0.12px">Служебные параметры</div><div class="a" style="left:317px;top:119px;width:566px;height:769px;background:#fff;border:1px solid #d9d9d9"></div><div class="a" style="left:321px;top:123px;width:560px;height:762px;background:#f0f0f0"></div><div class="a" style="left:317px;top:97px;width:150px;height:23px;background:#fff;border:1px solid #d9d9d9;border-bottom:none"></div><div class="a" style="left:318px;top:119px;width:148px;height:2px;background:#fff"></div><div class="t" style="left:325px;top:101px;font-size:12.43px">Универсальный объект</div><div class="a" style="left:321px;top:129px;width:559px;height:56px;border:1px solid #a0a0a0;box-shadow:inset 1px 1px 0 #fff, 1px 1px 0 #fff"></div><div class="a" style="left:329px;top:125px;width:102px;height:12px;background:#f0f0f0"></div><div class="t" style="left:329px;top:124px;font-weight:bold;letter-spacing:-0.27px">Общие настройки</div><div class="t" style="left:327px;top:144px;font-size:12.45px">Имя объекта</div><div class="a" style="left:408px;top:140px;width:168px;height:23px;background:#fff;border:1px solid #7a7a7a"></div><div class="t" style="left:411px;top:144px;">СЭТ 1</div><div class="t" style="left:580px;top:144px;font-size:12.45px">Комментарий</div><div class="a" style="left:665px;top:140px;width:208px;height:23px;background:#fff;border:1px solid #7a7a7a"></div><div class="t" style="left:327px;top:166px;font-weight:bold;letter-spacing:-0.15px">№2. Протокол опроса счетчиков электроэнергии СЭТ (новая версия); потомков объекта: 0</div><div class="a" style="left:322px;top:187px;width:559px;height:16px;background:linear-gradient(to bottom,#aba4a4,#e8e1e1);border-right:1px solid #7a7a7a"></div><div class="t" style="left:326px;top:188px;font-weight:bold;letter-spacing:-0.22px">Свойства объекта</div><div class="a" style="left:322px;top:203px;width:13px;height:651px;background:#ede6e6"></div><div class="a" style="left:321px;top:849px;width:560px;height:6px;background:#ede6e6"></div><div class="a" style="left:321px;top:186px;width:1px;height:663px;background:#fff"></div><div class="a" style="left:335px;top:203px;width:546px;height:647px;background:#fff"></div><div class="a" style="left:335px;top:203px;width:1px;height:647px;background:#808080"></div><div class="a" style="left:596px;top:203px;width:1px;height:647px;background:#808080"></div><div class="a" style="left:335px;top:203px;width:546px;height:1px;background:#808080"></div><div class="a" style="left:335px;top:222px;width:261px;height:1px;background:#808080"></div><div class="a" style="left:598px;top:222px;width:283px;height:1px;background:#808080"></div><div class="a" style="left:335px;top:241px;width:261px;height:1px;background:#808080"></div><div class="a" style="left:598px;top:241px;width:283px;height:1px;background:#808080"></div><div class="a" style="left:335px;top:260px;width:261px;height:1px;background:#808080"></div><div class="a" style="left:598px;top:260px;width:283px;height:1px;background:#808080"></div><div class="a" style="left:335px;top:279px;width:261px;height:1px;background:#808080"></div><div class="a" style="left:598px;top:279px;width:283px;height:1px;background:#808080"></div><div class="a" style="left:335px;top:298px;width:261px;height:1px;background:#808080"></div><div class="a" style="left:598px;top:298px;width:283px;height:1px;background:#808080"></div><div class="a" style="left:335px;top:317px;width:261px;height:1px;background:#808080"></div><div class="a" style="left:598px;top:317px;width:283px;height:1px;background:#808080"></div><div class="a" style="left:335px;top:336px;width:261px;height:1px;background:#808080"></div><div class="a" style="left:598px;top:336px;width:283px;height:1px;background:#808080"></div><div class="a" style="left:335px;top:355px;width:261px;height:1px;background:#808080"></div><div class="a" style="left:598px;top:355px;width:283px;height:1px;background:#808080"></div><div class="a" style="left:335px;top:374px;width:261px;height:1px;background:#808080"></div><div class="a" style="left:598px;top:374px;width:283px;height:1px;background:#808080"></div><div class="a" style="left:335px;top:393px;width:261px;height:1px;background:#808080"></div><div class="a" style="left:598px;top:393px;width:283px;height:1px;background:#808080"></div><div class="a" style="left:335px;top:412px;width:261px;height:1px;background:#808080"></div><div class="a" style="left:598px;top:412px;width:283px;height:1px;background:#808080"></div><div class="a" style="left:335px;top:431px;width:261px;height:1px;background:#808080"></div><div class="a" style="left:598px;top:431px;width:283px;height:1px;background:#808080"></div><div class="a" style="left:335px;top:450px;width:261px;height:1px;background:#808080"></div><div class="a" style="left:598px;top:450px;width:283px;height:1px;background:#808080"></div><div class="a" style="left:335px;top:469px;width:261px;height:1px;background:#808080"></div><div class="a" style="left:598px;top:469px;width:283px;height:1px;background:#808080"></div><div class="a" style="left:335px;top:488px;width:261px;height:1px;background:#808080"></div><div class="a" style="left:598px;top:488px;width:283px;height:1px;background:#808080"></div><div class="a" style="left:335px;top:507px;width:261px;height:1px;background:#808080"></div><div class="a" style="left:598px;top:507px;width:283px;height:1px;background:#808080"></div><div class="a" style="left:335px;top:526px;width:261px;height:1px;background:#808080"></div><div class="a" style="left:598px;top:526px;width:283px;height:1px;background:#808080"></div><div class="a" style="left:335px;top:545px;width:261px;height:1px;background:#808080"></div><div class="a" style="left:598px;top:545px;width:283px;height:1px;background:#808080"></div><div class="a" style="left:335px;top:564px;width:261px;height:1px;background:#808080"></div><div class="a" style="left:598px;top:564px;width:283px;height:1px;background:#808080"></div><div class="a" style="left:335px;top:583px;width:261px;height:1px;background:#808080"></div><div class="a" style="left:598px;top:583px;width:283px;height:1px;background:#808080"></div><div class="a" style="left:335px;top:602px;width:261px;height:1px;background:#808080"></div><div class="a" style="left:598px;top:602px;width:283px;height:1px;background:#808080"></div><div class="a" style="left:335px;top:621px;width:261px;height:1px;background:#808080"></div><div class="a" style="left:598px;top:621px;width:283px;height:1px;background:#808080"></div><div class="a" style="left:335px;top:640px;width:261px;height:1px;background:#808080"></div><div class="a" style="left:598px;top:640px;width:283px;height:1px;background:#808080"></div><div class="a" style="left:335px;top:659px;width:261px;height:1px;background:#808080"></div><div class="a" style="left:598px;top:659px;width:283px;height:1px;background:#808080"></div><div class="a" style="left:335px;top:678px;width:261px;height:1px;background:#808080"></div><div class="a" style="left:598px;top:678px;width:283px;height:1px;background:#808080"></div><div class="a" style="left:335px;top:697px;width:261px;height:1px;background:#808080"></div><div class="a" style="left:598px;top:697px;width:283px;height:1px;background:#808080"></div><div class="a" style="left:335px;top:716px;width:261px;height:1px;background:#808080"></div><div class="a" style="left:598px;top:716px;width:283px;height:1px;background:#808080"></div><div class="a" style="left:335px;top:735px;width:261px;height:1px;background:#808080"></div><div class="a" style="left:598px;top:735px;width:283px;height:1px;background:#808080"></div><div class="a" style="left:335px;top:754px;width:261px;height:1px;background:#808080"></div><div class="a" style="left:598px;top:754px;width:283px;height:1px;background:#808080"></div><div class="a" style="left:335px;top:773px;width:261px;height:1px;background:#808080"></div><div class="a" style="left:598px;top:773px;width:283px;height:1px;background:#808080"></div><div class="a" style="left:335px;top:792px;width:261px;height:1px;background:#808080"></div><div class="a" style="left:598px;top:792px;width:283px;height:1px;background:#808080"></div><div class="a" style="left:335px;top:811px;width:261px;height:1px;background:#808080"></div><div class="a" style="left:598px;top:811px;width:283px;height:1px;background:#808080"></div><div class="a" style="left:335px;top:830px;width:261px;height:1px;background:#808080"></div><div class="a" style="left:598px;top:830px;width:283px;height:1px;background:#808080"></div><div class="a" style="left:335px;top:849px;width:261px;height:1px;background:#808080"></div><div class="a" style="left:598px;top:849px;width:283px;height:1px;background:#808080"></div><div class="t" style="left:340px;top:207px;">Тип среды</div><div class="t" style="left:600px;top:207px;">0</div><div class="t" style="left:340px;top:226px;">COM.Порт</div><div class="t" style="left:600px;top:226px;">1</div><div class="t" style="left:340px;top:245px;">COM.Скорость</div><div class="t" style="left:600px;top:245px;">6</div><div class="t" style="left:340px;top:264px;">COM.Межсим. множитель</div><div class="t" style="left:600px;top:264px;">3</div><div class="t" style="left:340px;top:283px;">COM.Четность</div><div class="t" style="left:600px;top:283px;">0</div><div class="t" style="left:340px;top:302px;">TCP.IP-адрес</div><div class="t" style="left:600px;top:302px;">127.0.0.1</div><div class="t" style="left:340px;top:321px;">TCP.Порт</div><div class="t" style="left:600px;top:321px;">502</div><div class="t" style="left:340px;top:340px;">Период</div><div class="t" style="left:600px;top:340px;">1000</div><div class="t" style="left:340px;top:359px;">Таймаут</div><div class="t" style="left:600px;top:359px;">2000</div><div class="t" style="left:340px;top:378px;">Число попыток</div><div class="t" style="left:600px;top:378px;">2</div><div class="t" style="left:340px;top:397px;">Время удержания</div><div class="t" style="left:600px;top:397px;">600</div><div class="t" style="left:340px;top:416px;">Синхронизация времени</div><div class="t" style="left:600px;top:416px;">4</div><div class="t" style="left:340px;top:435px;">Освобождать порт</div><svg class="a" style="left:600px;top:434px" width="13" height="13" viewBox="0 0 13 13"><rect x=".5" y=".5" width="12" height="12" fill="#fff" stroke="#333"/></svg><div class="t" style="left:616px;top:435px;">Нет</div><div class="t" style="left:340px;top:454px;">Симуляция</div><div class="t" style="left:600px;top:454px;">0</div><div class="t" style="left:340px;top:473px;">Транзит.Порт</div><div class="t" style="left:600px;top:473px;">0</div><div class="t" style="left:340px;top:492px;">Транзит.Таймаут активности</div><div class="t" style="left:600px;top:492px;">0</div><div class="t" style="left:340px;top:511px;">Лог</div><div class="t" style="left:600px;top:511px;">0</div><div class="t" style="left:340px;top:530px;">Название</div><div class="t" style="left:600px;top:530px;"></div><div class="t" style="left:340px;top:549px;">Вести архив УСПД</div><svg class="a" style="left:600px;top:548px" width="13" height="13" viewBox="0 0 13 13"><rect x=".5" y=".5" width="12" height="12" fill="#fff" stroke="#333"/><path d="M2 6.5l3 3 6-6" fill="none" stroke="#333" stroke-width="1.1"/></svg><div class="t" style="left:616px;top:549px;">Да</div><div class="t" style="left:340px;top:568px;">Вычитывать события</div><svg class="a" style="left:600px;top:567px" width="13" height="13" viewBox="0 0 13 13"><rect x=".5" y=".5" width="12" height="12" fill="#fff" stroke="#333"/><path d="M2 6.5l3 3 6-6" fill="none" stroke="#333" stroke-width="1.1"/></svg><div class="t" style="left:616px;top:568px;">Да</div><div class="t" style="left:340px;top:587px;">Профиль мощности 30 минут</div><svg class="a" style="left:600px;top:586px" width="13" height="13" viewBox="0 0 13 13"><rect x=".5" y=".5" width="12" height="12" fill="#fff" stroke="#333"/><path d="M2 6.5l3 3 6-6" fill="none" stroke="#333" stroke-width="1.1"/></svg><div class="t" style="left:616px;top:587px;">Да</div><div class="t" style="left:340px;top:606px;">Тарифов</div><div class="t" style="left:600px;top:606px;">1</div><div class="t" style="left:340px;top:625px;">Мощность</div><svg class="a" style="left:600px;top:624px" width="13" height="13" viewBox="0 0 13 13"><rect x=".5" y=".5" width="12" height="12" fill="#fff" stroke="#333"/><path d="M2 6.5l3 3 6-6" fill="none" stroke="#333" stroke-width="1.1"/></svg><div class="t" style="left:616px;top:625px;">Да</div><div class="t" style="left:340px;top:644px;">Напряжение</div><svg class="a" style="left:600px;top:643px" width="13" height="13" viewBox="0 0 13 13"><rect x=".5" y=".5" width="12" height="12" fill="#fff" stroke="#333"/><path d="M2 6.5l3 3 6-6" fill="none" stroke="#333" stroke-width="1.1"/></svg><div class="t" style="left:616px;top:644px;">Да</div><div class="t" style="left:340px;top:663px;">Ток</div><svg class="a" style="left:600px;top:662px" width="13" height="13" viewBox="0 0 13 13"><rect x=".5" y=".5" width="12" height="12" fill="#fff" stroke="#333"/><path d="M2 6.5l3 3 6-6" fill="none" stroke="#333" stroke-width="1.1"/></svg><div class="t" style="left:616px;top:663px;">Да</div><div class="t" style="left:340px;top:682px;">Фактор мощности</div><svg class="a" style="left:600px;top:681px" width="13" height="13" viewBox="0 0 13 13"><rect x=".5" y=".5" width="12" height="12" fill="#fff" stroke="#333"/><path d="M2 6.5l3 3 6-6" fill="none" stroke="#333" stroke-width="1.1"/></svg><div class="t" style="left:616px;top:682px;">Да</div><div class="t" style="left:340px;top:701px;">Частота</div><svg class="a" style="left:600px;top:700px" width="13" height="13" viewBox="0 0 13 13"><rect x=".5" y=".5" width="12" height="12" fill="#fff" stroke="#333"/></svg><div class="t" style="left:616px;top:701px;">Нет</div><div class="t" style="left:340px;top:720px;">Е со сброса</div><svg class="a" style="left:600px;top:719px" width="13" height="13" viewBox="0 0 13 13"><rect x=".5" y=".5" width="12" height="12" fill="#fff" stroke="#333"/><path d="M2 6.5l3 3 6-6" fill="none" stroke="#333" stroke-width="1.1"/></svg><div class="t" style="left:616px;top:720px;">Да</div><div class="t" style="left:340px;top:739px;">Е за сутки</div><svg class="a" style="left:600px;top:738px" width="13" height="13" viewBox="0 0 13 13"><rect x=".5" y=".5" width="12" height="12" fill="#fff" stroke="#333"/></svg><div class="t" style="left:616px;top:739px;">Нет</div><div class="t" style="left:340px;top:758px;">Е за месяц</div><svg class="a" style="left:600px;top:757px" width="13" height="13" viewBox="0 0 13 13"><rect x=".5" y=".5" width="12" height="12" fill="#fff" stroke="#333"/></svg><div class="t" style="left:616px;top:758px;">Нет</div><div class="t" style="left:340px;top:777px;">Е за год</div><svg class="a" style="left:600px;top:776px" width="13" height="13" viewBox="0 0 13 13"><rect x=".5" y=".5" width="12" height="12" fill="#fff" stroke="#333"/></svg><div class="t" style="left:616px;top:777px;">Нет</div><div class="t" style="left:340px;top:796px;">Е на начало суток</div><svg class="a" style="left:600px;top:795px" width="13" height="13" viewBox="0 0 13 13"><rect x=".5" y=".5" width="12" height="12" fill="#fff" stroke="#333"/><path d="M2 6.5l3 3 6-6" fill="none" stroke="#333" stroke-width="1.1"/></svg><div class="t" style="left:616px;top:796px;">Да</div><div class="t" style="left:340px;top:815px;">Е на начало месяца</div><svg class="a" style="left:600px;top:814px" width="13" height="13" viewBox="0 0 13 13"><rect x=".5" y=".5" width="12" height="12" fill="#fff" stroke="#333"/><path d="M2 6.5l3 3 6-6" fill="none" stroke="#333" stroke-width="1.1"/></svg><div class="t" style="left:616px;top:815px;">Да</div><div class="t" style="left:340px;top:834px;">Е на начало года</div><svg class="a" style="left:600px;top:833px" width="13" height="13" viewBox="0 0 13 13"><rect x=".5" y=".5" width="12" height="12" fill="#fff" stroke="#333"/><path d="M2 6.5l3 3 6-6" fill="none" stroke="#333" stroke-width="1.1"/></svg><div class="t" style="left:616px;top:834px;">Да</div><div class="a" style="left:1px;top:888px;width:313px;height:1px;background:#fff"></div><div class="a" style="left:313px;top:119px;width:1px;height:770px;background:#fff"></div><div class="a" style="left:882px;top:898px;width:2px;height:2px;background:#b8b8b8"></div><div class="a" style="left:879px;top:901px;width:2px;height:2px;background:#b8b8b8"></div><div class="a" style="left:882px;top:901px;width:2px;height:2px;background:#b8b8b8"></div><div class="a" style="left:876px;top:904px;width:2px;height:2px;background:#b8b8b8"></div><div class="a" style="left:879px;top:904px;width:2px;height:2px;background:#b8b8b8"></div><div class="a" style="left:882px;top:904px;width:2px;height:2px;background:#b8b8b8"></div><div class="a" style="left:0px;top:0px;width:886px;height:1px;background:#2a3342"></div><div class="a" style="left:0px;top:908px;width:886px;height:1px;background:#5e5e5e"></div><div class="a" style="left:0px;top:0px;width:1px;height:57px;background:#1e2838"></div><div class="a" style="left:0px;top:57px;width:1px;height:852px;background:#6a6a6a"></div><div class="a" style="left:1px;top:119px;width:1px;height:769px;background:#a0a0a0"></div><div class="a" style="left:885px;top:0px;width:1px;height:57px;background:#1e2838"></div><div class="a" style="left:885px;top:57px;width:1px;height:852px;background:#6a6a6a"></div>
</body></html>
